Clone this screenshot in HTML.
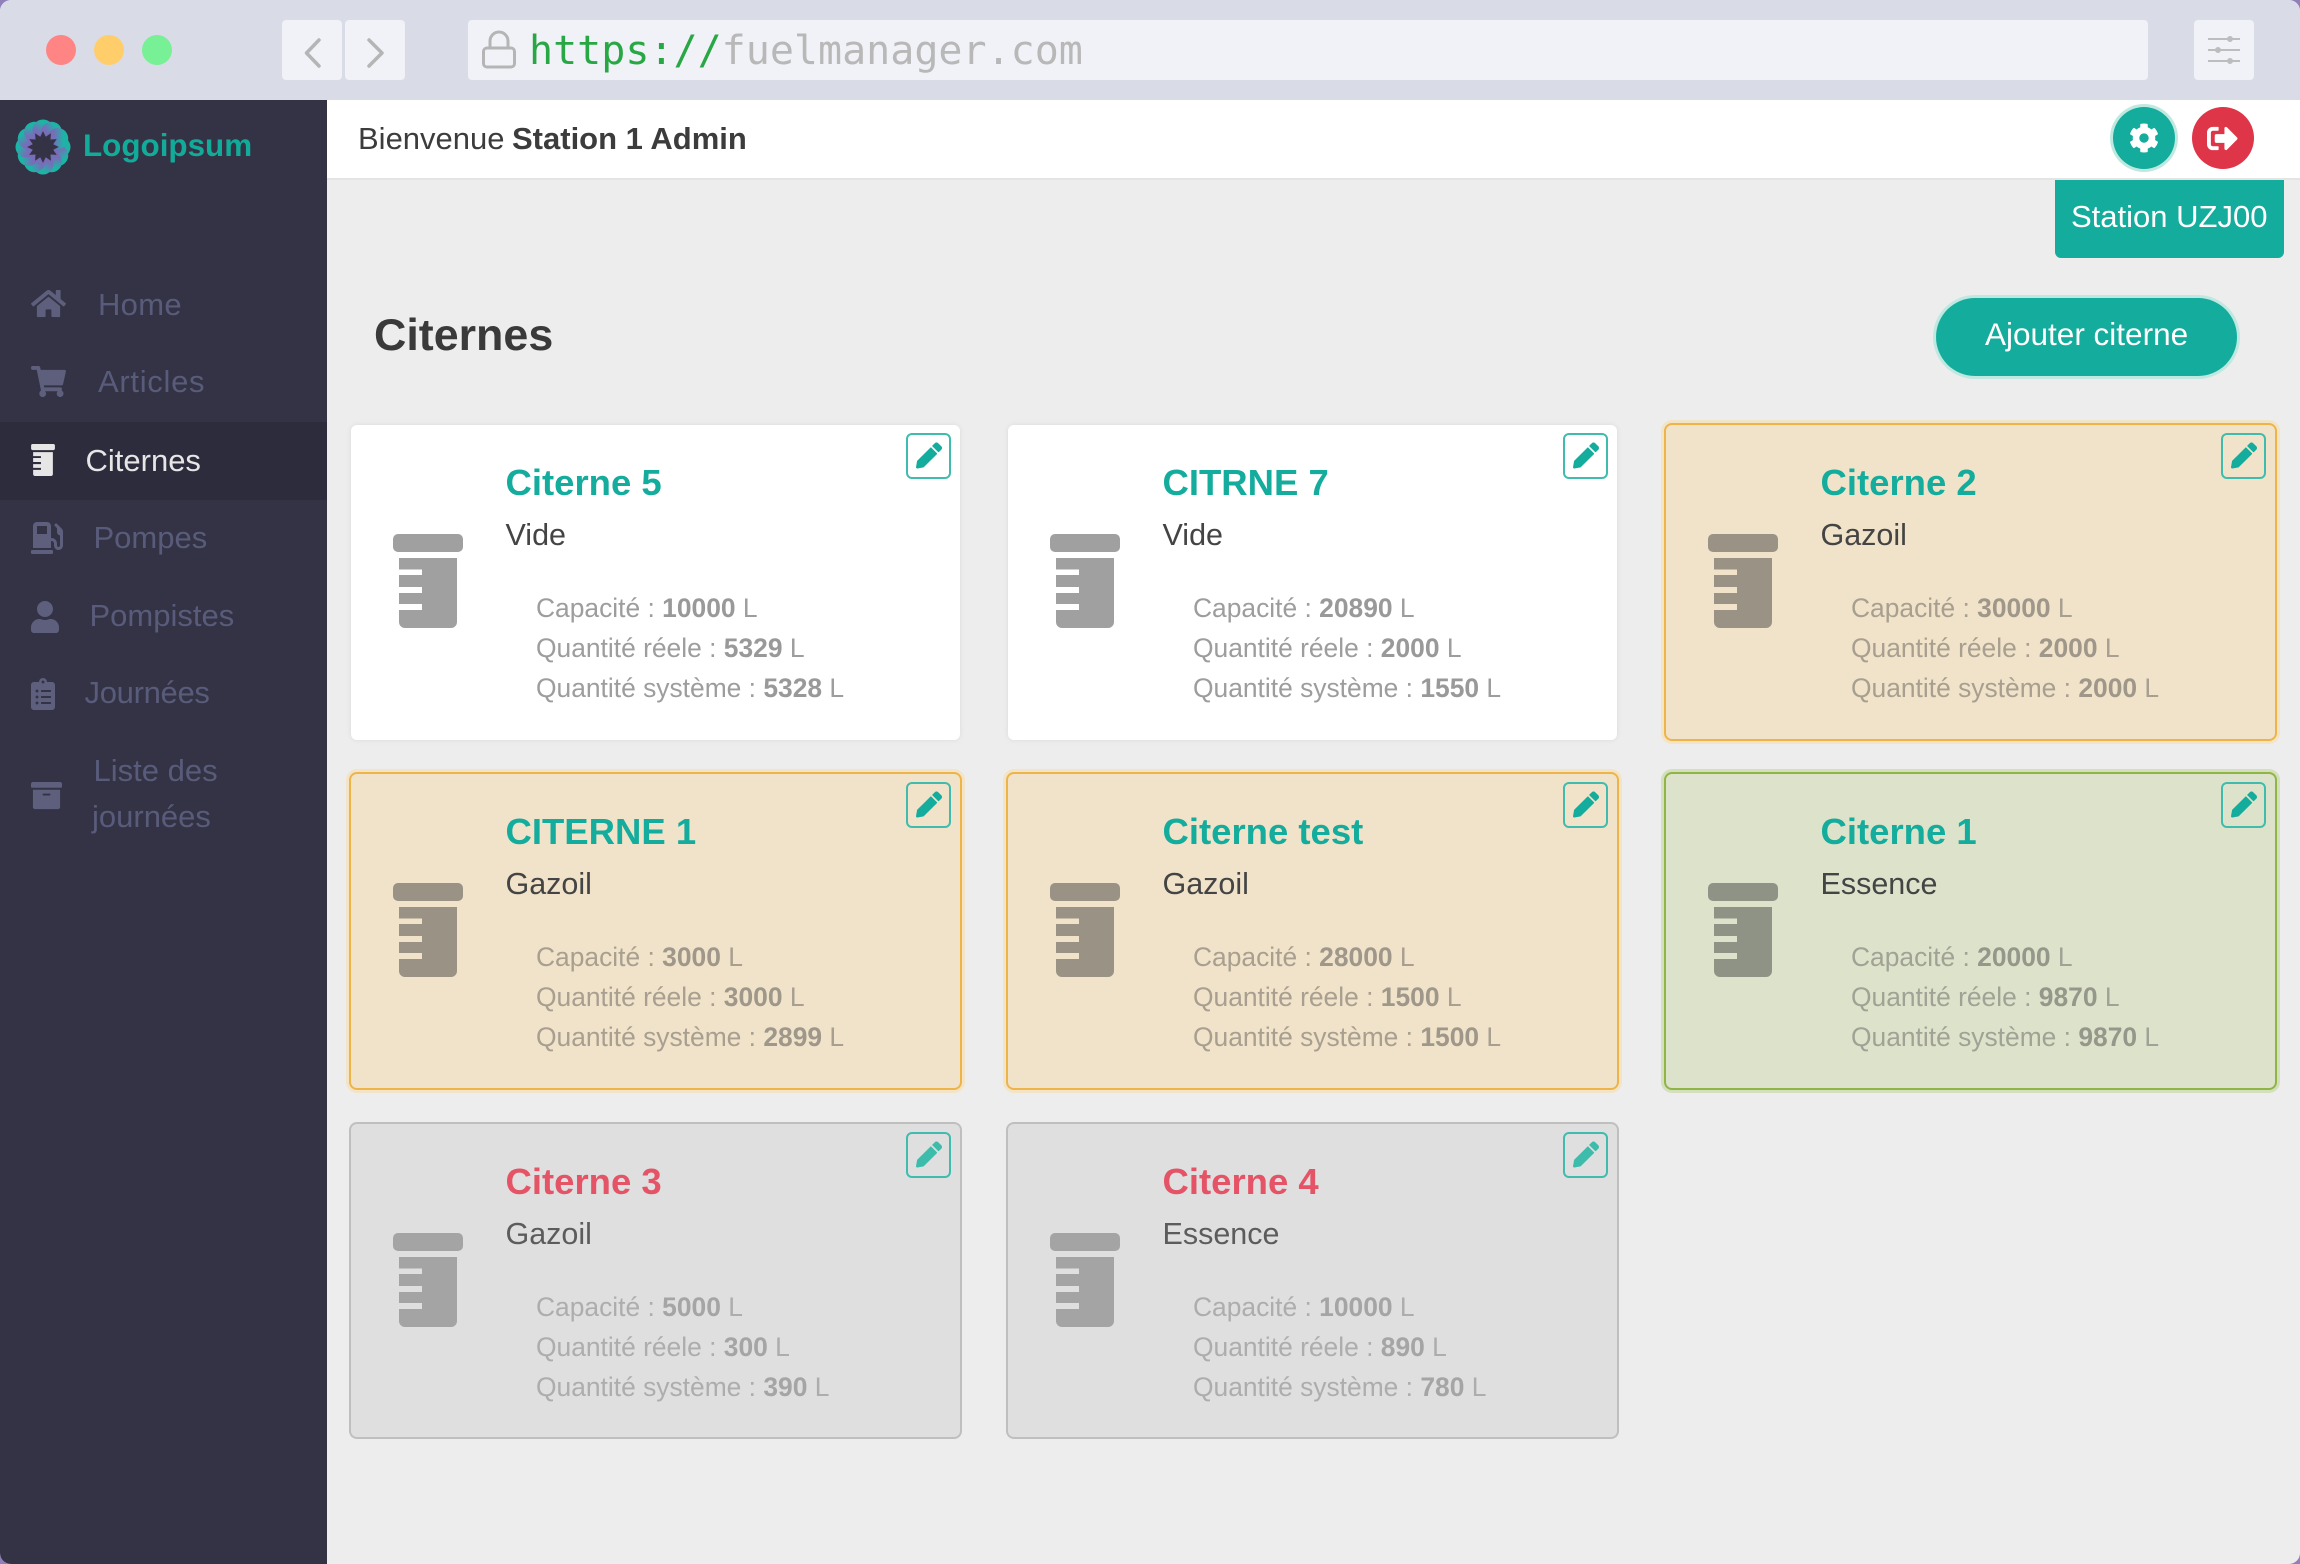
<!DOCTYPE html>
<html lang="fr"><head><meta charset="utf-8"><title>Citernes</title>
<style>
*{box-sizing:border-box;margin:0;padding:0}
html,body{width:2300px;height:1564px;overflow:hidden;background:#8f80ba}
body{font-family:"Liberation Sans",sans-serif;position:relative}
#win{position:absolute;left:0;top:0;width:2300px;height:1564px;border-radius:11px;overflow:hidden;background:#ededed}
.t{position:absolute;white-space:nowrap}
#bar{position:absolute;left:0;top:0;width:2300px;height:100px;background:#d9dbe7}
.dot{position:absolute;top:35px;width:30px;height:30px;border-radius:50%}
.btn{position:absolute;top:20px;height:60px;background:#f1f2f7;border-radius:4px}
#url{position:absolute;left:529px;top:27px;font:40px/48px "DejaVu Sans Mono",monospace;color:#b8b8b8;white-space:nowrap}
#url b{font-weight:400;color:#28a745}
#side{position:absolute;left:0;top:100px;width:327px;height:1464px;background:#333345}
#act{position:absolute;left:0;top:422px;width:327px;height:78px;background:#2c2c3d}
.nav{font-size:31px;line-height:36px;color:#595b7a}
.ni{position:absolute;fill:#5d5f7d}
#head{position:absolute;left:327px;top:100px;width:1973px;height:80px;background:#fff;border-bottom:2px solid #e4e4e4}
.card{position:absolute;width:609px;height:315px;border-radius:6px;background:#fff;box-shadow:0 0 6px rgba(0,0,0,.08)}
.card .jar{position:absolute;left:42px;top:109px;width:70px;height:94px;fill:#a0a0a0}
.card h3{position:absolute;left:154.500px;top:38px;font-size:36.500px;line-height:40px;font-weight:700;color:#14ac9c;white-space:nowrap}
.card .s{position:absolute;left:154.500px;top:92px;font-size:30.500px;line-height:36px;color:#444;white-space:nowrap}
.card .l{position:absolute;left:185px;top:163px;font-size:26.400px;line-height:40px;color:#9d9d9d;white-space:nowrap}
.card .l b{color:#999}
.card .e{position:absolute;left:555px;top:8px;width:45px;height:46px;border:2px solid #3fbcae;border-radius:6px}
.card .e svg{position:absolute;left:8px;top:7px;width:26px;height:27px;fill:#14ac9c}
.am{background:#f0e3c9;box-shadow:0 0 0 2px #eeb44a,0 0 0 5px #f3e4c6;height:314px}
.am .jar{fill:#9a9284}.am .l{color:#a89f90}.am .l b{color:#9f978a}
.gr{background:#dde3cb;box-shadow:0 0 0 2px #8fb545,0 0 0 5px #d3dfbd;height:314px}
.gr .jar{fill:#8f9386}.gr .l{color:#a0a295}.gr .l b{color:#95978b}
.ds{background:#dfdfdf;box-shadow:0 0 0 2px #bfbfbf;height:313px}
.ds .jar{fill:#a4a4a4}.ds .l{color:#adadad}.ds .l b{color:#a5a5a5}.ds .s{color:#5c5c5c}.ds h3{color:#e55366}
.ds .e svg{fill:#3dbcab}
</style></head><body>
<svg width="0" height="0" style="position:absolute">
<symbol id="jar" viewBox="0 0 70 94"><rect width="70" height="18" rx="5"/><path d="M6 24H64V88a6 6 0 0 1-6 6H12a6 6 0 0 1-6-6V76H29V70H6V59H29V53H6V41H29V35.500H6Z"/></symbol>
<symbol id="pen" viewBox="0 0 512 512"><path d="M497.9 142.1l-46.1 46.1c-4.7 4.7-12.3 4.7-17 0l-111-111c-4.7-4.7-4.7-12.3 0-17l46.1-46.1c18.7-18.7 49.1-18.7 67.9 0l60.1 60.1c18.8 18.7 18.8 49.1 0 67.9zM284.2 99.8L21.6 362.4.4 483.9c-2.9 16.4 11.4 30.6 27.8 27.8l121.5-21.3 262.6-262.6c4.7-4.7 4.7-12.3 0-17l-111-111c-4.8-4.7-12.4-4.7-17.1 0z"/></symbol>
<linearGradient id="pg" x1="0" y1="0.2" x2="1" y2="0.8"><stop offset="0" stop-color="#8a5cb8"/><stop offset=".38" stop-color="#6f74b8"/><stop offset=".75" stop-color="#1cb5a5"/></linearGradient>
</svg>
<div id="win">
<div id="bar">
<div class="dot" style="left:46px;background:#ff8585"></div>
<div class="dot" style="left:94px;background:#ffce6b"></div>
<div class="dot" style="left:142px;background:#78f096"></div>
<div class="btn" style="left:282px;width:60px"><svg width="60" height="60" style="position:absolute;left:0;top:0"><path d="M37 20L24.500 33 37 46" fill="none" stroke="#b5b5b5" stroke-width="3.500" stroke-linecap="round" stroke-linejoin="round"/></svg></div>
<div class="btn" style="left:345px;width:60px"><svg width="60" height="60" style="position:absolute;left:0;top:0"><path d="M24 20L37 33 24 46" fill="none" stroke="#b5b5b5" stroke-width="3.500" stroke-linecap="round" stroke-linejoin="round"/></svg></div>
<div class="btn" style="left:468px;width:1680px"></div>
<svg width="36" height="40" style="position:absolute;left:481px;top:30px" fill="none" stroke="#b5b5b5" stroke-width="3"><path d="M9 19V11a9 9 0 0 1 18 0v8"/><rect x="2.500" y="18" width="31" height="19" rx="3.500"/></svg>
<div id="url"><b>https://</b>fuelmanager.com</div>
<div class="btn" style="left:2194px;width:60px"><svg width="60" height="60" style="position:absolute;left:0;top:0" fill="#bdbdbd" stroke="#bdbdbd" stroke-width="2"><path d="M14 19H46M14 30H46M14 41H46" fill="none"/><circle cx="36" cy="19" r="2"/><circle cx="24" cy="30" r="2"/><circle cx="36" cy="41" r="2"/></svg></div>
</div>

<div id="side"></div>
<div id="act"></div>
<svg width="58" height="58" viewBox="-29 -29 58 58" style="position:absolute;left:14px;top:118px">
<defs><circle id="pt" cx="17" cy="0" r="10.500" fill="url(#pg)"/></defs>
<g>
<use href="#pt"/><use href="#pt" transform="rotate(30)"/><use href="#pt" transform="rotate(60)"/><use href="#pt" transform="rotate(90)"/><use href="#pt" transform="rotate(120)"/><use href="#pt" transform="rotate(150)"/><use href="#pt" transform="rotate(180)"/><use href="#pt" transform="rotate(210)"/><use href="#pt" transform="rotate(240)"/><use href="#pt" transform="rotate(270)"/><use href="#pt" transform="rotate(300)"/><use href="#pt" transform="rotate(330)"/>
</g>
<path fill="#333345" transform="scale(.88)" d="M0-18L3.100-11.600 9-15.600 8.500-8.500 15.600-9 11.600-3.100 18 0 11.600 3.100 15.600 9 8.500 8.500 9 15.600 3.100 11.600 0 18-3.100 11.600-9 15.600-8.500 8.500-15.600 9-11.600 3.100-18 0-11.600-3.100-15.600-9-8.500-8.500-9-15.600-3.100-11.600Z"/>
</svg>
<div class="t" style="left:83px;top:128px;font-size:31.400px;line-height:36px;font-weight:700;color:#12ab99">Logoipsum</div>

<svg class="ni" width="35" height="31" viewBox="0 0 576 512" style="left:31px;top:288px"><path d="M280.37 148.26L96 300.11V464a16 16 0 0 0 16 16l112.06-.29a16 16 0 0 0 15.92-16V368a16 16 0 0 1 16-16h64a16 16 0 0 1 16 16v95.64a16 16 0 0 0 16 16.05L464 480a16 16 0 0 0 16-16V300L295.67 148.26a12.19 12.19 0 0 0-15.3 0zM571.6 251.47L488 182.56V44.05a12 12 0 0 0-12-12h-56a12 12 0 0 0-12 12v72.61L318.47 43a48 48 0 0 0-61 0L4.34 251.47a12 12 0 0 0-1.6 16.9l25.5 31A12 12 0 0 0 45.15 301l235.22-193.74a12.19 12.19 0 0 1 15.3 0L530.9 301a12 12 0 0 0 16.9-1.6l25.5-31a12 12 0 0 0-1.7-16.93z"/></svg>
<div class="t nav" style="left:98px;top:287px;letter-spacing:.3px">Home</div>
<svg class="ni" width="35" height="31" viewBox="0 0 576 512" style="left:31px;top:366px"><path d="M528.12 301.319l47.273-208C578.806 78.301 567.391 64 551.99 64H159.208l-9.166-44.81C147.758 8.021 137.93 0 126.529 0H24C10.745 0 0 10.745 0 24v16c0 13.255 10.745 24 24 24h69.883l70.248 343.435C147.325 417.1 136 435.222 136 456c0 30.928 25.072 56 56 56s56-25.072 56-56c0-15.674-6.447-29.835-16.824-40h209.647C430.447 426.165 424 440.326 424 456c0 30.928 25.072 56 56 56s56-25.072 56-56c0-22.172-12.888-41.332-31.579-50.405l5.517-24.276c3.413-15.018-8.002-29.319-23.403-29.319H218.117l-6.545-32h293.145c11.206 0 20.92-7.754 23.403-18.681z"/></svg>
<div class="t nav" style="left:98px;top:364.400px;letter-spacing:.7px">Articles</div>
<svg class="ni" width="24" height="32" style="left:31px;top:444px;fill:#e6e6e6"><use href="#jar"/></svg>
<div class="t nav" style="left:85.500px;top:443px;color:#e6e6e6">Citernes</div>
<svg class="ni" width="32" height="32" viewBox="0 0 512 512" style="left:31px;top:522px"><path d="M336 448H16c-8.800 0-16 7.200-16 16v32c0 8.800 7.200 16 16 16h320c8.800 0 16-7.200 16-16v-32c0-8.800-7.200-16-16-16zm157.200-340.700l-81-81c-6.200-6.200-16.400-6.200-22.600 0l-11.300 11.300c-6.200 6.200-6.200 16.400 0 22.600L416 97.900V160c0 28.100 20.900 51.300 48 55.200V376c0 13.200-10.800 24-24 24s-24-10.800-24-24v-32c0-48.600-39.400-88-88-88h-8V64c0-35.300-28.700-64-64-64H96C60.700 0 32 28.700 32 64v352h288V304h8c22.100 0 40 17.900 40 40v27.800c0 37.700 27 72 64.500 75.900 43 4.300 79.500-29.500 79.500-71.700V152.600c0-17-6.800-33.300-18.800-45.300zM256 192H96V64h160v128z"/></svg>
<div class="t nav" style="left:93.500px;top:520px">Pompes</div>
<svg class="ni" width="28" height="32" viewBox="0 0 448 512" style="left:31px;top:601px"><path d="M224 256c70.700 0 128-57.300 128-128S294.700 0 224 0 96 57.300 96 128s57.300 128 128 128zm89.600 32h-16.700c-22.200 10.200-46.900 16-72.900 16s-50.600-5.800-72.900-16h-16.700C60.200 288 0 348.200 0 422.400V464c0 26.500 21.500 48 48 48h352c26.500 0 48-21.500 48-48v-41.600c0-74.200-60.200-134.400-134.400-134.400z"/></svg>
<div class="t nav" style="left:89.500px;top:598.400px">Pompistes</div>
<svg class="ni" width="24" height="32" viewBox="0 0 384 512" style="left:31px;top:678px"><path d="M336 64h-80c0-35.300-28.700-64-64-64s-64 28.700-64 64H48C21.500 64 0 85.500 0 112v352c0 26.500 21.500 48 48 48h288c26.500 0 48-21.500 48-48V112c0-26.500-21.500-48-48-48zM96 424c-13.300 0-24-10.700-24-24s10.700-24 24-24 24 10.700 24 24-10.700 24-24 24zm0-96c-13.300 0-24-10.700-24-24s10.700-24 24-24 24 10.700 24 24-10.700 24-24 24zm0-96c-13.300 0-24-10.700-24-24s10.700-24 24-24 24 10.700 24 24-10.700 24-24 24zm96-192c13.300 0 24 10.700 24 24s-10.700 24-24 24-24-10.700-24-24 10.700-24 24-24zm128 368c0 4.400-3.600 8-8 8H168c-4.400 0-8-3.600-8-8v-16c0-4.400 3.600-8 8-8h144c4.400 0 8 3.600 8 8v16zm0-96c0 4.400-3.600 8-8 8H168c-4.400 0-8-3.600-8-8v-16c0-4.400 3.600-8 8-8h144c4.400 0 8 3.600 8 8v16zm0-96c0 4.400-3.600 8-8 8H168c-4.400 0-8-3.600-8-8v-16c0-4.400 3.600-8 8-8h144c4.400 0 8 3.600 8 8v16z"/></svg>
<div class="t nav" style="left:84.500px;top:675.400px;letter-spacing:-.3px">Journées</div>
<svg class="ni" width="31" height="31" viewBox="0 0 512 512" style="left:31px;top:780px"><path d="M32 448c0 17.700 14.300 32 32 32h384c17.700 0 32-14.300 32-32V160H32v288zm160-212c0-6.600 5.400-12 12-12h104c6.600 0 12 5.400 12 12v8c0 6.600-5.400 12-12 12H204c-6.600 0-12-5.400-12-12v-8zM480 32H32C14.300 32 0 46.300 0 64v48c0 8.800 7.200 16 16 16h480c8.800 0 16-7.200 16-16V64c0-17.700-14.300-32-32-32z"/></svg>
<div class="t nav" style="left:93.500px;top:753.400px">Liste des</div>
<div class="t nav" style="left:92px;top:799px">journées</div>

<div id="head"></div>
<div class="t" style="left:358px;top:121px;font-size:31px;line-height:36px;color:#3c3c3c">Bienvenue</div>
<div class="t" style="left:512px;top:120.500px;font-size:31px;line-height:36px;font-weight:700;color:#3c3c3c">Station 1 Admin</div>

<div style="position:absolute;left:2113px;top:107px;width:62px;height:62px;border-radius:50%;background:#14ac9c;box-shadow:0 0 0 3px #bfe9e0"></div>
<svg width="30" height="30" viewBox="0 0 512 512" fill="#fff" style="position:absolute;left:2129px;top:123px"><path d="M487.400 315.700l-42.600-24.600c4.300-23.200 4.300-47 0-70.200l42.600-24.600c4.900-2.800 7.100-8.600 5.500-14-11.100-35.600-30-67.800-54.700-94.600-3.800-4.100-10-5.100-14.800-2.300L380.800 110c-17.900-15.400-38.500-27.300-60.800-35.100V25.800c0-5.600-3.900-10.500-9.400-11.700-36.700-8.200-74.300-7.800-109.200 0-5.500 1.200-9.400 6.100-9.400 11.700V75c-22.200 7.900-42.800 19.800-60.800 35.100L88.700 85.500c-4.900-2.800-11-1.900-14.800 2.300-24.700 26.700-43.600 58.900-54.700 94.600-1.700 5.400.6 11.200 5.500 14L67.300 221c-4.300 23.200-4.300 47 0 70.200l-42.600 24.600c-4.900 2.800-7.100 8.600-5.500 14 11.100 35.600 30 67.800 54.700 94.600 3.800 4.100 10 5.100 14.800 2.300l42.600-24.600c17.900 15.400 38.500 27.300 60.800 35.100v49.200c0 5.600 3.900 10.500 9.400 11.700 36.700 8.200 74.300 7.800 109.200 0 5.500-1.200 9.400-6.100 9.400-11.700v-49.200c22.200-7.900 42.800-19.800 60.800-35.100l42.600 24.600c4.900 2.800 11 1.900 14.800-2.300 24.700-26.700 43.600-58.900 54.700-94.600 1.500-5.500-.7-11.300-5.600-14.100zM256 336c-44.100 0-80-35.900-80-80s35.900-80 80-80 80 35.900 80 80-35.900 80-80 80z"/></svg>
<div style="position:absolute;left:2192px;top:107px;width:62px;height:62px;border-radius:50%;background:#de3548"></div>
<svg width="31" height="31" viewBox="0 0 512 512" fill="#fff" style="position:absolute;left:2207px;top:123px"><path d="M497 273L329 441c-15 15-41 4.500-41-17v-96H152c-13.300 0-24-10.700-24-24v-96c0-13.300 10.700-24 24-24h136V88c0-21.400 25.900-32 41-17l168 168c9.300 9.400 9.300 24.600 0 34zM192 436v-40c0-6.600-5.400-12-12-12H96c-17.700 0-32-14.300-32-32V160c0-17.700 14.300-32 32-32h84c6.600 0 12-5.400 12-12V76c0-6.600-5.400-12-12-12H96c-53 0-96 43-96 96v192c0 53 43 96 96 96h84c6.600 0 12-5.400 12-12z"/></svg>

<div style="position:absolute;left:2055px;top:180px;width:229px;height:78px;background:#14ac9c;border-radius:0 0 6px 6px"></div>
<div class="t" style="left:2071px;top:199px;font-size:31px;line-height:36px;color:#fff">Station UZJ00</div>

<div class="t" style="left:374px;top:310px;font-size:44.800px;line-height:50px;font-weight:700;color:#3a3a3a">Citernes</div>
<div style="position:absolute;left:1936px;top:298px;width:301px;height:78px;border-radius:39px;background:#14ac9c;box-shadow:0 0 0 3px #bfe9e0"></div>
<div class="t" style="left:1985px;top:316px;font-size:31.500px;line-height:36px;color:#fff">Ajouter citerne</div>

<div class="card" style="left:351px;top:425px"><svg class="jar"><use href="#jar"/></svg><h3>Citerne 5</h3><div class="s">Vide</div><div class="l">Capacité : <b>10000</b> L<br>Quantité réele : <b>5329</b> L<br>Quantité système : <b>5328</b> L</div><div class="e"><svg><use href="#pen"/></svg></div></div>
<div class="card" style="left:1008px;top:425px"><svg class="jar"><use href="#jar"/></svg><h3>CITRNE 7</h3><div class="s">Vide</div><div class="l">Capacité : <b>20890</b> L<br>Quantité réele : <b>2000</b> L<br>Quantité système : <b>1550</b> L</div><div class="e"><svg><use href="#pen"/></svg></div></div>
<div class="card am" style="left:1666px;top:425px"><svg class="jar"><use href="#jar"/></svg><h3>Citerne 2</h3><div class="s">Gazoil</div><div class="l">Capacité : <b>30000</b> L<br>Quantité réele : <b>2000</b> L<br>Quantité système : <b>2000</b> L</div><div class="e"><svg><use href="#pen"/></svg></div></div>

<div class="card am" style="left:351px;top:774px"><svg class="jar"><use href="#jar"/></svg><h3>CITERNE 1</h3><div class="s">Gazoil</div><div class="l">Capacité : <b>3000</b> L<br>Quantité réele : <b>3000</b> L<br>Quantité système : <b>2899</b> L</div><div class="e"><svg><use href="#pen"/></svg></div></div>
<div class="card am" style="left:1008px;top:774px"><svg class="jar"><use href="#jar"/></svg><h3>Citerne test</h3><div class="s">Gazoil</div><div class="l">Capacité : <b>28000</b> L<br>Quantité réele : <b>1500</b> L<br>Quantité système : <b>1500</b> L</div><div class="e"><svg><use href="#pen"/></svg></div></div>
<div class="card gr" style="left:1666px;top:774px"><svg class="jar"><use href="#jar"/></svg><h3>Citerne 1</h3><div class="s">Essence</div><div class="l">Capacité : <b>20000</b> L<br>Quantité réele : <b>9870</b> L<br>Quantité système : <b>9870</b> L</div><div class="e"><svg><use href="#pen"/></svg></div></div>

<div class="card ds" style="left:351px;top:1124px"><svg class="jar"><use href="#jar"/></svg><h3>Citerne 3</h3><div class="s">Gazoil</div><div class="l">Capacité : <b>5000</b> L<br>Quantité réele : <b>300</b> L<br>Quantité système : <b>390</b> L</div><div class="e"><svg><use href="#pen"/></svg></div></div>
<div class="card ds" style="left:1008px;top:1124px"><svg class="jar"><use href="#jar"/></svg><h3>Citerne 4</h3><div class="s">Essence</div><div class="l">Capacité : <b>10000</b> L<br>Quantité réele : <b>890</b> L<br>Quantité système : <b>780</b> L</div><div class="e"><svg><use href="#pen"/></svg></div></div>
</div>
</body></html>
